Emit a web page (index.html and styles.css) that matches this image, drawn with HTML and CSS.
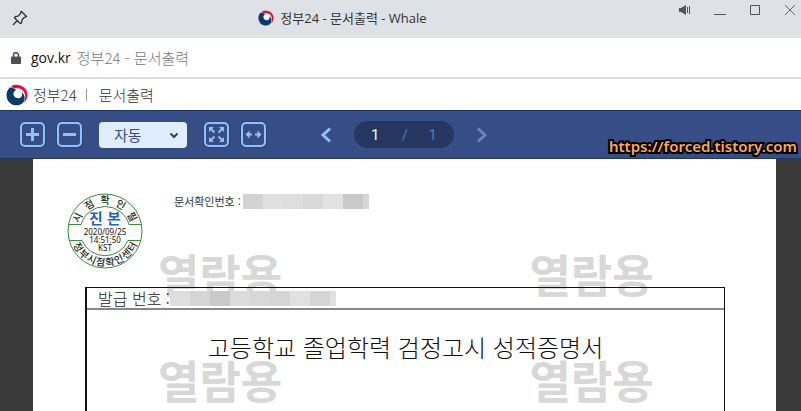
FILE: index.html
```html
<!DOCTYPE html>
<html lang="ko">

<head>
  <meta charset="UTF-8" />
  <meta name="viewport" content="width=device-width, initial-scale=1" />
  <title>정부24 - 문서출력</title>
  <link rel="stylesheet" href="styles.css">
</head>

<body>
  <svg class="symbols" aria-hidden="true">
    <symbol id="gov" viewBox="0 0 22 22">
      <circle cx="11" cy="11" r="10.500" fill="#fff" />
      <path d="M5 2.200C12 -2 22 3 21.500 11.500C21.300 14.500 20 17 18 18.800C20.500 13 19 7.500 15.500 5.500C12 3.500 8.500 4.800 7.500 4.200C6.500 3.500 6 2.800 5 2.200Z" fill="#e2123b" />
      <path d="M3.800 3.500C-.5 7.500 -.5 14.500 3.500 18.500C7.500 22.500 14.500 22 17.200 18.500C19.800 15 18.800 10 15.500 8.200C17 11 15.500 14 12.500 14.200C9.500 14.400 7 12 7.500 9C7.700 7.500 9 6.500 10.500 6C8 4.500 6 3 3.800 3.500Z" fill="#063a6b" />
    </symbol>
  </svg>

  <div class="window">
    <header class="title-bar">
      <button class="pin" aria-label="고정">
        <svg width="16" height="16" viewBox="0 0 16 16" fill="none" stroke="#333" stroke-width="1.300">
          <path d="M9.500 1.500L14.500 6.500L13.500 7.200L12 7.500L10 10L9.500 13L8.200 13.500L2.500 7.800L3.200 6.700L6 6.200L8.500 3.800L8.700 2.200ZM5 10.800L1 15" />
        </svg>
      </button>
      <div class="window-title">
        <svg class="logo-small"><use href="#gov" /></svg>
        <span>정부24 - 문서출력 - Whale</span>
      </div>
      <div class="window-buttons">
        <button aria-label="소리">
          <svg width="12" height="12" viewBox="0 0 12 12" fill="#555"><path d="M0 4H2L7 1V11L2 8H0ZM8 3H9V9H8ZM10 2H11V10H10Z" /></svg>
        </button>
        <button aria-label="최소화">
          <svg width="12" height="12" viewBox="0 0 12 12"><path d="M0 10.500H12" stroke="#555" /></svg>
        </button>
        <button aria-label="최대화">
          <svg width="12" height="12" viewBox="0 0 12 12"><path d="M1.500 1.500H10.500V10.500H1.500Z" fill="none" stroke="#555" /></svg>
        </button>
        <button aria-label="닫기">
          <svg width="12" height="12" viewBox="0 0 12 12"><path d="M1 1L11 11M11 1L1 11" stroke="#666" /></svg>
        </button>
      </div>
    </header>

    <div class="address-bar">
      <svg width="10" height="12" viewBox="0 0 10 12"><path d="M2.500 5V3.200A2.500 2.500 0 0 1 7.500 3.200V5" fill="none" stroke="#4a4f55" stroke-width="1.500" /><rect y="4.500" width="10" height="7.500" rx="1" fill="#4a4f55" /></svg>
      <span class="host">gov.kr</span>
      <span class="page-name">정부24 - 문서출력</span>
    </div>

    <div class="site-header">
      <svg class="logo"><use href="#gov" /></svg>
      <span class="site-name">정부24</span>
      <span class="menu-name">문서출력</span>
    </div>

    <nav class="toolbar">
      <button class="tool" aria-label="확대">
        <svg width="25" height="25" viewBox="0 0 25 25"><path d="M12.500 6V19M6 12.500H19" stroke-width="3" /></svg>
      </button>
      <button class="tool" aria-label="축소">
        <svg width="25" height="25" viewBox="0 0 25 25"><path d="M6 12.500H19" stroke-width="3" /></svg>
      </button>
      <div class="zoom">
        <select aria-label="배율">
          <option>자동</option>
        </select>
        <svg width="10" height="7" viewBox="0 0 10 7"><path d="M1.500 1.500L5 5L8.500 1.500" fill="none" stroke="#1e4670" stroke-width="2" /></svg>
      </div>
      <button class="tool" aria-label="전체 보기">
        <svg width="25" height="25" viewBox="0 0 25 25"><path d="M6 6L10.500 10.500M19 6L14.500 10.500M6 19L10.500 14.500M19 19L14.500 14.500" stroke-width="2" /><path class="heads" d="M5 5H10L5 10ZM20 5V10L15 5ZM5 20V15L10 20ZM20 20H15L20 15Z" /></svg>
      </button>
      <button class="tool" aria-label="너비 맞춤">
        <svg width="25" height="25" viewBox="0 0 25 25"><path d="M6 12.500H11M14 12.500H19" stroke-width="2" /><path class="heads" d="M4.500 12.500L8.500 8.500V16.500ZM20.500 12.500L16.500 8.500V16.500Z" /></svg>
      </button>
      <div class="pager">
        <button class="arrow" aria-label="이전">
          <svg width="12" height="16" viewBox="0 0 12 16"><path d="M10 1.500L3 8L10 14.500" /></svg>
        </button>
        <div class="pages">
          <input type="text" value="1" aria-label="페이지">
          <span>/</span>
          <span>1</span>
        </div>
        <button class="arrow next" aria-label="다음" disabled>
          <svg width="12" height="16" viewBox="0 0 12 16"><path d="M2 1.500L9 8L2 14.500" /></svg>
        </button>
      </div>
      <a class="credit" href="https://forced.tistory.com">https://forced.tistory.com</a>
    </nav>

    <main class="viewer">
      <article class="sheet">
        <div class="watermarks" aria-hidden="true">
          <span>열람용</span><span>열람용</span>
          <span>열람용</span><span>열람용</span>
        </div>

        <div class="sheet-head">
          <svg class="seal" width="76" height="76" viewBox="-38 -38 76 76">
            <g fill="none" stroke="#3a8a3a">
              <circle r="37" />
              <path d="M-36.500 -6.500H-24A25 25 0 0 1 24 -6.500H36.500M-35.500 9.500H-23A25 25 0 0 0 23 9.500H35.500" />
            </g>
            <g class="seal-ring">
              <text transform="rotate(-64)" y="-27">시</text>
              <text transform="rotate(-31)" y="-27">점</text>
              <text y="-27">확</text>
              <text transform="rotate(31)" y="-27">인</text>
              <text transform="rotate(62)" y="-27">필</text>
              <text transform="rotate(59)" y="35">정</text>
              <text transform="rotate(42)" y="35">부</text>
              <text transform="rotate(25)" y="35">시</text>
              <text transform="rotate(8)" y="35">점</text>
              <text transform="rotate(-9)" y="35">확</text>
              <text transform="rotate(-26)" y="35">인</text>
              <text transform="rotate(-43)" y="35">센</text>
              <text transform="rotate(-60)" y="35">터</text>
            </g>
            <text class="seal-mark" y="-7">진 본</text>
            <g class="seal-date">
              <text y="4">2020/09/25</text>
              <text y="12">14:51:50</text>
              <text y="20">KST</text>
            </g>
          </svg>
          <p class="check-number">문서확인번호 : <span class="mosaic mosaic-check"></span></p>
        </div>

        <section class="certificate">
          <p class="issue-number">발급 번호 :<span class="mosaic mosaic-issue"></span></p>
          <h1>고등학교 졸업학력 검정고시 성적증명서</h1>
        </section>
      </article>
    </main>
  </div>
</body>

</html>
```
FILE: styles.css
```css
* {
  box-sizing: border-box;
}

body {
  margin: 0;
  font-family: "Noto Sans CJK KR", sans-serif;
  color: #333;
}

button {
  padding: 0;
  border: 0;
  background: none;
  display: flex;
  cursor: pointer;
}

.symbols {
  position: absolute;
  width: 0;
  height: 0;
}

.window {
  display: flex;
  flex-direction: column;
  height: 100vh;
  overflow: hidden;
}

.title-bar {
  display: grid;
  grid-template-columns: 2fr auto 3fr;
  flex: none;
  height: 38px;
  padding: 4px 5px 7px 12px;
  background-color: #dee1e6;
}

.pin {
  align-self: center;
}

.window-title {
  display: flex;
  align-items: center;
  gap: 6px;
  font-family: "Open Sans", "Noto Sans CJK KR", sans-serif;
  font-size: 13px;
  line-height: 20px;
}

.logo-small {
  width: 16px;
  height: 16px;
}

.window-buttons {
  display: flex;
  justify-content: flex-end;
  gap: 23px;
}

.window-buttons button {
  height: 12px;
}

.address-bar {
  display: flex;
  align-items: center;
  flex: none;
  height: 41px;
  padding-left: 11px;
  border-bottom: 2px solid #dcdddf;
  font-size: 15px;
  line-height: 20px;
}

.host {
  margin: 0 6px 0 10px;
  font-family: "Open Sans", sans-serif;
  font-size: 14px;
  color: #111;
}

.page-name {
  font-weight: 300;
  color: #777;
}

.site-header {
  display: flex;
  align-items: center;
  flex: none;
  height: 31px;
  padding-left: 6px;
  font-size: 15px;
  line-height: 16px;
  font-weight: 300;
}

.logo {
  width: 22px;
  height: 22px;
  margin-right: 5px;
}

.site-name {
  padding-right: 9px;
}

.menu-name {
  position: relative;
  padding-left: 13px;
}

.menu-name::before {
  content: "";
  position: absolute;
  left: 0;
  top: 2px;
  height: 12px;
  border-left: 1px solid #999;
}

.toolbar {
  position: relative;
  display: flex;
  align-items: center;
  gap: 12px;
  flex: none;
  height: 49px;
  padding-left: 20px;
  background-color: #374d86;
  border-top: 1px solid #203765;
  border-bottom: 1px solid #203765;
}

.tool {
  border-radius: 5px;
  box-shadow: inset 0 0 0 2px #91c0fa, 0 0 0 1px #2c4478;
}

.tool svg {
  fill: none;
  stroke: #91c0fa;
}

.tool .heads {
  fill: #91c0fa;
  stroke: none;
}

.zoom {
  position: relative;
  margin: 0 5px;
}

.zoom select {
  display: block;
  appearance: none;
  width: 88px;
  height: 26px;
  padding: 0 15px;
  border: 0;
  border-radius: 4px;
  background-color: #e0edfe;
  font-family: inherit;
  font-size: 15px;
  line-height: 26px;
  color: #374d86;
}

.zoom svg {
  position: absolute;
  right: 8px;
  top: 10px;
}

.pager {
  display: flex;
  align-items: center;
  gap: 22px;
  margin-left: 42px;
}

.arrow svg {
  fill: none;
  stroke: #91c0fa;
  stroke-width: 3;
}

.next svg {
  stroke: #6586c2;
}

.pages {
  display: flex;
  align-items: center;
  justify-content: space-between;
  width: 100px;
  height: 27px;
  padding: 0 17px;
  border-radius: 14px;
  background-color: #253661;
  font-family: Roboto, sans-serif;
  font-size: 15px;
  color: #487bc5;
}

.pages input {
  width: 10px;
  padding: 0;
  border: 0;
  background: none;
  font: inherit;
  color: #fff;
}

.credit {
  position: absolute;
  right: 4px;
  bottom: 1px;
  font-family: "Noto Sans", sans-serif;
  font-size: 15px;
  line-height: 22px;
  font-weight: 600;
  color: #ffa851;
  text-decoration: none;
  -webkit-text-stroke: 4px #000;
  paint-order: stroke fill;
}

.viewer {
  flex: 1;
  min-height: 0;
  padding: 0 25px 0 33px;
  background-color: #393939;
}

.sheet {
  position: relative;
  height: 100%;
  display: flex;
  flex-direction: column;
  padding: 34px 51px 0 52px;
  background-color: #fff;
  overflow: hidden;
}

.watermarks {
  position: absolute;
  left: 125px;
  top: 82px;
  display: grid;
  grid-template-columns: 50% 50%;
  width: 100%;
  font-size: 45px;
  line-height: 66px;
  row-gap: 40px;
  font-weight: 700;
  color: #d8d8d8;
}

.sheet-head {
  position: relative;
  display: flex;
  gap: 31px;
  margin-left: -18px;
}

.seal text {
  text-anchor: middle;
}

.seal-ring {
  font-size: 10px;
  font-weight: 500;
  fill: #222;
}

.seal-mark {
  font-size: 15px;
  font-weight: 700;
  fill: #1d67b5;
}

.seal-date {
  font-family: "Noto Sans", sans-serif;
  font-size: 8px;
  fill: #111;
}

.check-number {
  display: flex;
  align-items: center;
  gap: 2px;
  height: 16px;
  margin: 0;
  font-size: 11px;
  line-height: 16px;
}

.mosaic {
  height: 15px;
}

.mosaic-check {
  width: 126px;
  background: linear-gradient(90deg, #d3d3d3 20px, #e0e0e0 20px 40px, #dedede 40px 60px, #d8d8d8 60px 80px, #e2e2e2 80px 100px, #c9c9c9 100px 120px, #d6d6d6 120px);
}

.mosaic-issue {
  width: 166px;
  background: linear-gradient(90deg, #dedede 20px, #d5d5d5 20px 40px, #c9c9c9 40px 60px, #dbdbdb 60px 80px, #d8d8d8 80px 100px, #d5d5d5 100px 120px, #e1e1e1 120px 140px, #d5d5d5 140px 160px, #e0e0e0 160px);
}

.certificate {
  position: relative;
  flex: 1;
  margin-top: 18px;
  border: solid #111;
  border-width: 1px 1px 0 2px;
}

.issue-number {
  display: flex;
  align-items: center;
  height: 22px;
  margin: 0;
  padding-left: 11px;
  border-bottom: 2px solid #888;
  font-size: 16px;
  line-height: 20px;
  font-weight: 300;
  color: #222;
}

.certificate h1 {
  margin: 19px 0 0;
  font-size: 24px;
  line-height: 36px;
  font-weight: 300;
  text-align: center;
  color: #111;
}
```
